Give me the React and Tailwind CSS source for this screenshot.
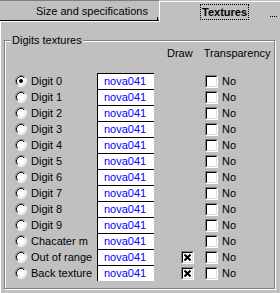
import React from 'react';

const rows = [
    'Digit 0', 'Digit 1', 'Digit 2', 'Digit 3', 'Digit 4', 'Digit 5', 'Digit 6',
    'Digit 7', 'Digit 8', 'Digit 9', 'Chacater m', 'Out of range', 'Back texture'
];

const Radio = ({ checked }) => (
    <svg width="12" height="12" viewBox="0 0 12 12" className="shrink-0">
        <circle cx="6" cy="6" r="5" fill="#fff" />
        <path d="M2.11 9.89 A5.5 5.5 0 0 1 9.89 2.11" stroke="#808080" fill="none" />
        <path d="M9.89 2.11 A5.5 5.5 0 0 1 2.11 9.89" stroke="#fff" fill="none" />
        <path d="M2.82 9.18 A4.5 4.5 0 0 1 9.18 2.82" stroke="#000" fill="none" />
        <path d="M9.18 2.82 A4.5 4.5 0 0 1 2.82 9.18" stroke="#dfdfdf" fill="none" />
        {checked && <circle cx="6" cy="6" r="2" fill="#000" />}
    </svg>
);

const Check = ({ checked }) => (
    <div className="w-[13px] h-[13px] shrink-0 border border-t-[#808080] border-l-[#808080] border-b-white border-r-white">
        <div className="w-full h-full border border-t-black border-l-black border-b-[#dfdfdf] border-r-[#dfdfdf] bg-white flex items-center justify-center">
            {checked && (
                <svg width="7" height="7" viewBox="0 0 7 7">
                    <path d="M0.5 0.5 L6.5 6.5 M6.5 0.5 L0.5 6.5" stroke="#000" strokeWidth="2" />
                </svg>
            )}
        </div>
    </div>
);

export default function App() {
    return (
        <div className="w-[280px] h-[293px] bg-[#c0c0c0] relative overflow-hidden font-['Liberation_Sans',Arial,sans-serif] text-[11px] text-black">
            {/* tabs */}
            <div className="flex h-[22px]">
                <div className="w-[159px] flex flex-col">
                    <div className="h-[21px] border-t border-[#808080] border-b border-b-black pl-[36px] pt-[4px] leading-[13px] relative">
                        Size and specifications
                        <div className="absolute right-[1px] bottom-0 w-px h-[3px] bg-black" />
                    </div>
                    <div className="h-px bg-white" />
                </div>
                <div className="flex-1 mt-[1px] border-l border-t border-white pl-[40px] pt-[2px] relative">
                    <span className="inline-block h-[16px] border border-dotted border-black px-[1px] pt-[1px] leading-[13px] font-bold">
                        Textures
                    </span>
                    <div className="absolute top-[14px] left-[110px] w-[7px] border-t border-dotted border-black" />
                </div>
            </div>

            {/* panel */}
            <div className="border-l border-white h-[271px] pl-[3px] pt-[18px]">
                <div className="relative w-[271px] h-[249px] border border-[#808080] shadow-[inset_1px_1px_0_#fff,1px_1px_0_#fff]">
                    <span className="absolute left-[6px] top-[-7px] bg-[#c0c0c0] px-[1px] leading-[13px]">Digits textures</span>

                    <div className="flex h-[13px] mt-[6px] leading-[13px]">
                        <span className="ml-[162px]">Draw</span>
                        <span className="ml-[11px]">Transparency</span>
                    </div>

                    <div className="mt-[13px] flex flex-col">
                        {rows.map((label, i) => (
                            <div key={label} className="h-[16px] flex items-center pl-[10px]">
                                <Radio checked={i === 0} />
                                <span className="w-[66px] ml-[4px] leading-[16px] whitespace-nowrap">{label}</span>
                                <div className="w-[57px] h-[16px] border-t border-l border-black bg-white text-[#0000ff] pl-[6px] leading-[15px]">
                                    nova041
                                </div>
                                <div className="ml-[27px] w-[13px]">
                                    {i >= 11 && <Check checked />}
                                </div>
                                <div className="ml-[11px]">
                                    <Check />
                                </div>
                                <span className="ml-[4px] leading-[16px]">No</span>
                            </div>
                        ))}
                    </div>
                </div>
            </div>
        </div>
    );
}
